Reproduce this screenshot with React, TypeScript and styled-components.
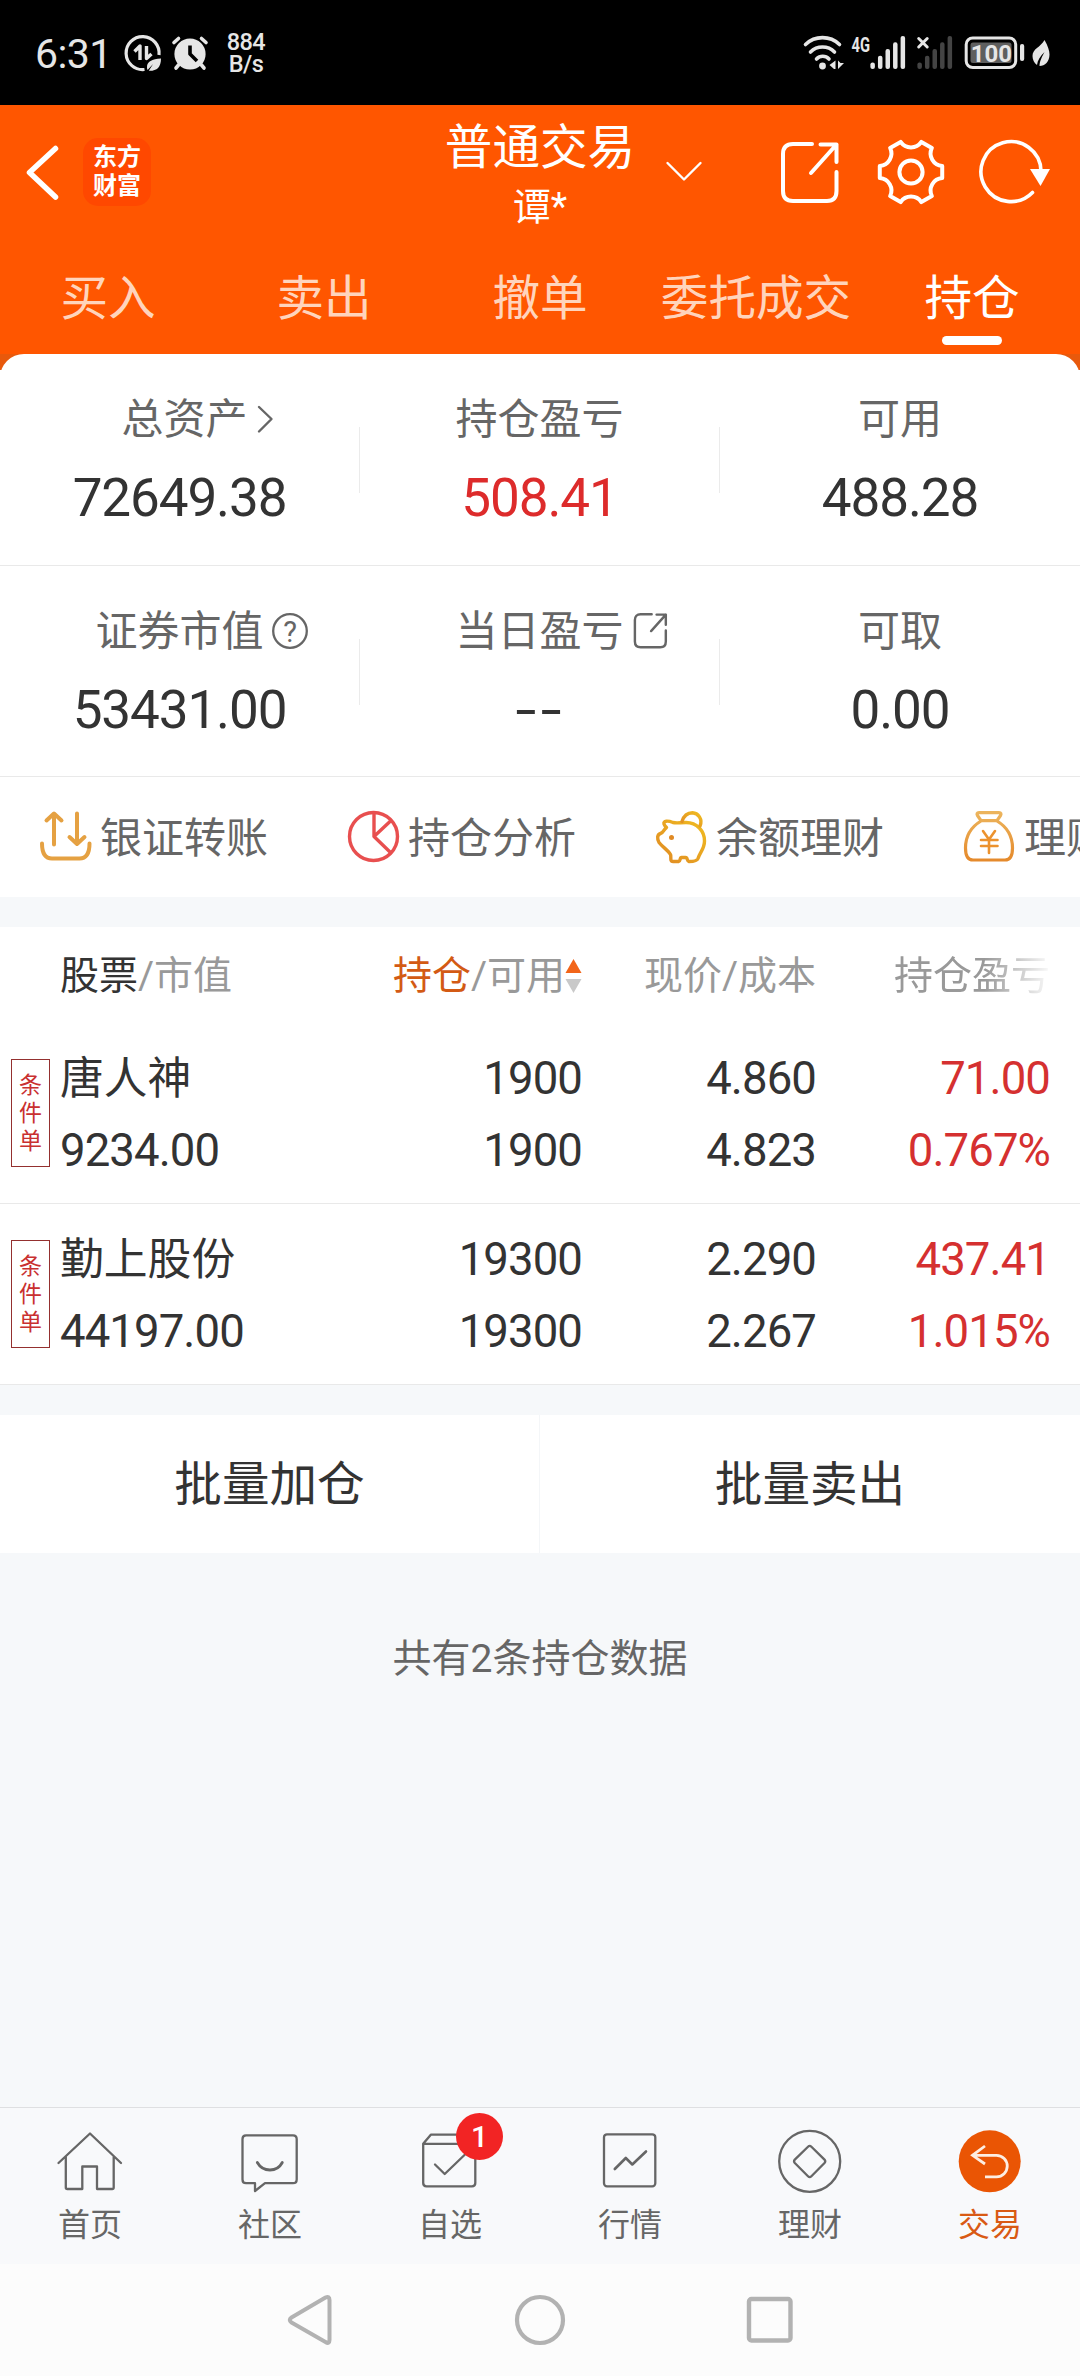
import React from 'react';
import styled, { createGlobalStyle, css } from 'styled-components';

const Global = createGlobalStyle`
  * { box-sizing: border-box; }
  html, body { margin: 0; padding: 0; }
  body {
    font-family: Roboto, "Noto Sans CJK SC", sans-serif;
    color: #333;
    background: #fff;
  }
  svg { display: block; flex: none; overflow: visible; }
`;

const Screen = styled.div`
  width: 1080px;
  height: 2376px;
  display: flex;
  flex-direction: column;
  overflow: hidden;
  background: #fff;
`;

/* ---------- status bar ---------- */

const StatusBar = styled.div`
  height: 105px;
  flex: none;
  background: #000;
  color: #e6e6e6;
  display: flex;
  justify-content: space-between;
  padding: 0 30px 0 35px;
`;

const StatusGroup = styled.div`
  display: flex;
  align-items: center;
`;

const Clock = styled.span`
  width: 88px;
  font-size: 41px;
  line-height: 48px;
  letter-spacing: -0.6px;
  padding-top: 3px;
`;

const AlarmSlot = styled.span`
  margin-left: 9px;
`;

const NetSpeed = styled.div`
  margin-left: 18px;
  width: 40px;
  display: flex;
  flex-direction: column;
  font-size: 23.5px;
  font-weight: 500;
  line-height: 21.5px;
  letter-spacing: -0.6px;
  text-align: center;
  padding-top: 2px;
`;

/* ---------- header ---------- */

const Header = styled.header`
  flex: none;
  height: 265px;
  background: linear-gradient(#ff5600 0 249px, #e8590c 249px);
  color: #fff;
`;

const TopRow = styled.div`
  height: 134px;
  display: grid;
  grid-template-columns: 1fr 192px 1fr;
`;

const TopLeft = styled.div`
  display: flex;
  align-items: center;
  padding-left: 24px;
`;

const Logo = styled.div`
  width: 68px;
  height: 68px;
  margin-left: 23px;
  padding-top: 5px;
  border-radius: 15px;
  background: #ff4800;
  font-size: 24px;
  line-height: 29px;
  font-weight: 700;
  text-align: center;
`;

const TitleBlock = styled.div`
  padding-top: 13px;
  text-align: center;
  white-space: nowrap;
`;

const Title = styled.div`
  font-size: 47.6px;
  line-height: 60px;
`;

const Account = styled.div`
  font-size: 38px;
  line-height: 58px;
`;

const TopRight = styled.div`
  display: flex;
  align-items: center;
  padding-left: 28px;
`;

const IconSlot = styled.span<{ $left: number }>`
  margin-left: ${p => p.$left}px;
`;

const Tabs = styled.nav`
  display: grid;
  grid-template-columns: repeat(5, 1fr);
`;

const Tab = styled.div<{ $active?: boolean }>`
  height: 115px;
  padding-top: 30px;
  display: flex;
  flex-direction: column;
  align-items: center;
  gap: 7px;
  font-size: 47.6px;
  line-height: 60px;
  white-space: nowrap;
  color: ${p => (p.$active ? '#fff' : '#ffd4bc')};
`;

const Underline = styled.i`
  width: 60px;
  height: 9px;
  border-radius: 5px;
  background: #fff;
`;

/* ---------- summary ---------- */

const Card = styled.section`
  flex: none;
  margin-top: -16px;
  border-radius: 24px 24px 0 0;
  background: #fff;
`;

const SummaryRow = styled.div<{ $h: number }>`
  height: ${p => p.$h}px;
  display: grid;
  grid-template-columns: repeat(3, 1fr);
  border-bottom: 1px solid #e9e9e9;
`;

const Metric = styled.div`
  display: flex;
  padding-top: 36px;
  &:not(:last-child)::after {
    content: '';
    width: 1px;
    height: 66px;
    margin-top: 37px;
    background: #ebebeb;
  }
`;

const MetricBody = styled.div`
  flex: 1;
`;

const MetricLabel = styled.div<{ $shift?: number }>`
  display: grid;
  grid-template-columns: 1fr auto 1fr;
  align-items: center;
  padding-left: ${p => p.$shift || 0}px;
  font-size: 42px;
  line-height: 60px;
  color: #666;
  white-space: nowrap;
`;

const LabelIcon = styled.span`
  grid-column: 3;
  padding-left: 8px;
  margin-top: -3px;
`;

const LabelText = styled.span`
  grid-column: 2;
`;

const MetricValue = styled.div<{ $up?: boolean }>`
  margin-top: 16px;
  font-size: 53px;
  line-height: 64px;
  letter-spacing: -1.1px;
  text-align: center;
  color: ${p => (p.$up ? '#dd2b2b' : '#333')};
`;

const Dashes = styled.span`
  display: inline-block;
  margin-right: -3px;
  letter-spacing: 3px;
  transform: scaleX(1.42);
`;

const Actions = styled.div`
  height: 120px;
  display: flex;
  overflow: hidden;
`;

const Action = styled.div`
  flex: none;
  width: 308px;
  padding-left: 40px;
  display: flex;
  align-items: center;
  gap: 8px;
  font-size: 42px;
  line-height: 60px;
  color: #666;
  white-space: nowrap;
  span { padding-top: 3px; }
`;

const Gap = styled.div`
  height: 30px;
  flex: none;
  background: #f6f8fa;
`;

/* ---------- holdings ---------- */

const rowGrid = css`
  display: grid;
  grid-template-columns: 49px 1fr repeat(3, 234px);
  padding-left: 11px;
  padding-right: 30px;
`;

const Holdings = styled.section`
  flex: none;
  background: #fff;
`;

const HeadRow = styled.div`
  ${rowGrid}
  height: 96px;
  padding-top: 2px;
  align-items: center;
  font-size: 39px;
  line-height: 56px;
  color: #999;
  white-space: nowrap;
`;

const HeadCell = styled.div<{ $left?: boolean; $fade?: boolean }>`
  display: flex;
  align-items: center;
  justify-content: ${p => (p.$left ? 'flex-start' : 'flex-end')};
  ${p => p.$left && 'grid-column: 2;'}
  ${p => p.$fade && 'mask-image: linear-gradient(90deg, #000 72%, rgba(0,0,0,.05) 100%);'}
`;

const Strong = styled.span<{ $color: string }>`
  color: ${p => p.$color};
`;

const StockRow = styled.div`
  ${rowGrid}
  height: 181px;
  padding-top: 20px;
  border-bottom: 1px solid #e9e9e9;
`;

const Tag = styled.div`
  width: 39px;
  height: 108px;
  margin-top: 16px;
  padding: 12px 7px 0;
  border: 1px solid #94302f;
  font-size: 23px;
  line-height: 28px;
  color: #c93030;
  display: flex;
  flex-direction: column;
`;

const Cell = styled.div<{ $left?: boolean; $up?: boolean }>`
  text-align: ${p => (p.$left ? 'left' : 'right')};
  font-size: 45.5px;
  line-height: 72px;
  letter-spacing: -0.9px;
  white-space: nowrap;
  color: ${p => (p.$up ? '#d53030' : '#333')};
`;

const StockName = styled.div`
  font-size: 43.8px;
  letter-spacing: 0;
`;

/* ---------- lower area ---------- */

const Batch = styled.div`
  flex: none;
  height: 138px;
  display: grid;
  grid-template-columns: 1fr 1fr;
  background: #fff;
`;

const BatchButton = styled.div`
  display: flex;
  align-items: center;
  justify-content: center;
  font-size: 47.6px;
  line-height: 60px;
  padding-top: 2px;
  &:first-child { border-right: 1px solid #f4f6f8; }
`;

const Rest = styled.div`
  flex: 1;
  padding-top: 76px;
  background: #f6f8fa;
  text-align: center;
  font-size: 39px;
  line-height: 60px;
  color: #666;
`;

const BottomBar = styled.nav`
  flex: none;
  height: 157px;
  display: grid;
  grid-template-columns: repeat(6, 1fr);
  border-top: 1px solid #dedfe1;
  background: #f8f9fb;
`;

const BottomItem = styled.div<{ $active?: boolean }>`
  position: relative;
  padding-top: 17px;
  display: flex;
  flex-direction: column;
  align-items: center;
  font-size: 32px;
  line-height: 44px;
  color: ${p => (p.$active ? '#d95a14' : '#666')};
  span { margin-top: 6px; }
`;

const Badge = styled.b`
  position: absolute;
  left: 96px;
  top: 5px;
  width: 47px;
  height: 47px;
  border-radius: 50%;
  background: #f22424;
  color: #fff;
  font-size: 30px;
  line-height: 48px;
  font-weight: 500;
  text-align: center;
`;

const SystemNav = styled.div`
  flex: none;
  height: 112px;
  display: flex;
  justify-content: center;
  align-items: center;
  gap: 178px;
  background: #fcfcfc;
`;

/* ---------- icons ---------- */

const stroke = (color: string, w: number) => ({
  fill: 'none',
  stroke: color,
  strokeWidth: w,
  strokeLinecap: 'round' as const,
  strokeLinejoin: 'round' as const,
});

const DataSaver = () => (
  <svg width="40" height="40" viewBox="122 33 40 40">
    <path d="M158 56A16.5 16.5 0 1 0 143.5 70.5" transform="translate(0 -1)" {...stroke('#e6e6e6', 3.2)} strokeLinecap="butt" />
    <path d="M133.5 51.5l5.5-5.5V60M145.5 46v12.5l5-4.5" {...stroke('#e6e6e6', 3.4)} strokeLinecap="butt" />
    <path d="M160 58.5c-9 .5-14 3-14 8.5 0 1 0 2 .6 3l5.5-6-4.300 6.800c7.700.4 12.200-3.300 12.200-12.300z" fill="#e6e6e6" />
  </svg>
);

const Alarm = () => (
  <svg width="36" height="36" viewBox="171.500 35 36 36">
    <circle cx="189.500" cy="54" r="15.600" fill="#e6e6e6" />
    <path d="M173.500 42.500l4.500-4M205.500 42.500l-4.500-4M178 65l-2.500 3M201 65l2.500 3" {...stroke('#e6e6e6', 3.6)} />
    <path d="M189.500 45.500V54l7 7" {...stroke('#000', 3.6)} strokeLinecap="butt" />
  </svg>
);

const Wifi = () => (
  <svg width="41" height="36" viewBox="803 35 41 36">
    <path d="M805.500 44.500a24.500 24.500 0 0 1 34 0M810.500 52a17 17 0 0 1 24 0M816.500 59a8.500 8.500 0 0 1 12.500 0" {...stroke('#e6e6e6', 3.6)} />
    <circle cx="822.500" cy="66" r="3.400" fill="#e6e6e6" />
    <path d="M835.500 60.500V69h-1.500l-4.500-4zM838 60.500v8.500l6-6h-3.500z" fill="#e6e6e6" />
  </svg>
);

const Signal = ({ x0, color, children }: { x0: number; color: string; children: React.ReactNode }) => (
  <svg width={55} height="36" viewBox={`${x0} 35 55 36`}>
    {children}
    {[62.5, 55.7, 49, 42.3, 36].map((top, i) => (
      <rect key={top} x={x0 + 20.4 + i * 7.55} y={top} width="4.500" height={69 - top} rx="2.100" fill={color} />
    ))}
  </svg>
);

const Battery = () => (
  <svg width="61" height="36" viewBox="964 35 61 36">
    <rect x="966.200" y="38" width="49.500" height="29.500" rx="6.500" {...stroke('#e6e6e6', 3)} />
    <rect x="970.500" y="42.500" width="41" height="20.500" rx="2.500" fill="#5f5f5f" />
    <text x="991.300" y="62" fontSize="24" fontWeight="700" textAnchor="middle" fill="#e6e6e6">100</text>
    <rect x="1020" y="44" width="4.200" height="17" rx="2" fill="#e6e6e6" />
  </svg>
);

const Leaf = () => (
  <svg width="18" height="28" viewBox="1031.500 39 18 28">
    <path d="M1044 40c3.500 6 5 11 5 14.500 0 7-4.500 11.500-10 11.500 0-5 3-10 5-14-4 4-7 8-7.500 13-3-2-4.500-5.500-4.500-9 0-7.500 8-8.500 12-16z" fill="#e6e6e6" />
  </svg>
);

const Back = () => (
  <svg width="36" height="60" viewBox="24 142 36 60">
    <path d="M55.500 148.500L29.500 172.500 55.500 197" {...stroke('#fff', 5.5)} />
  </svg>
);

const Down = () => (
  <svg width="40" height="24" viewBox="664 160 40 24">
    <path d="M667.500 163L684 179.500 700.500 163" {...stroke('#fff', 2.4)} />
  </svg>
);

const Export = ({ size, color, w }: { size: number; color: string; w: number }) => (
  <svg width={size} height={size} viewBox="0 0 64 64">
    <path d="M34 4H15Q5 4 5 14V51Q5 61 15 61H49Q58.500 61 58.500 51V32" {...stroke(color, w)} />
    <path d="M42.500 4.500H58.500V22M58.500 4.500L33 33" {...stroke(color, w)} />
  </svg>
);

const gearPath = (() => {
  const pt = (deg: number) => {
    const a = (deg * Math.PI) / 180;
    return `${(34 + 31.8 * Math.sin(a)).toFixed(2)} ${(34 - 31.8 * Math.cos(a)).toFixed(2)}`;
  };
  let d = `M${pt(-19)}`;
  for (let k = 0; k < 6; k++) {
    d += `A12.500 12.500 0 0 0 ${pt(60 * k + 19)}L${pt(60 * k + 41)}`;
  }
  return d + 'Z';
})();

const Gear = () => (
  <svg width="68" height="68" viewBox="0 0 68 68">
    <path d={gearPath} {...stroke('#fff', 4)} />
    <circle cx="34" cy="34" r="11.600" {...stroke('#fff', 4)} />
  </svg>
);

const Refresh = () => (
  <svg width="74" height="68" viewBox="977 138 74 68">
    <path d="M1041 171A30 30 0 1 0 1032.500 192.500" {...stroke('#fff', 3.6)} />
    <path d="M1030 169h20l-9.500 17z" fill="#fff" />
  </svg>
);

const Chevron = () => (
  <svg width="18" height="30" viewBox="0 0 18 30">
    <path d="M3 3L15.500 15 3 27.500" {...stroke('#666', 2.4)} />
  </svg>
);

const Help = () => (
  <svg width="36" height="36" viewBox="0 0 36 36">
    <circle cx="18" cy="18" r="16.800" {...stroke('#666', 2.3)} />
    <text x="18" y="28.500" fontSize="29" textAnchor="middle" fill="#666">?</text>
  </svg>
);

const Transfer = () => (
  <svg width="52" height="52" viewBox="0 0 52 52">
    <path d="M14 33.500V3M6.500 9.500L14 2.500 21.500 9.500M37 2.500V33M29.500 26L37 33 44.500 26M2 32.500Q2 47.500 12 47.500H39.500Q49.500 47.500 49.500 32.500" {...stroke('#e5a142', 4)} />
  </svg>
);

const Pie = () => (
  <svg width="52" height="52" viewBox="0 0 52 52">
    <circle cx="25.500" cy="25.500" r="24" {...stroke('#e84f4f', 3.4)} />
    <path d="M26 2V25.500L42 10.500M26 25.500L42 41" {...stroke('#e84f4f', 3.4)} />
  </svg>
);

const Pig = () => (
  <svg width="52" height="52" viewBox="0 0 52 52">
    <defs>
      <linearGradient id="pig" x1="1" y1="0" x2="0" y2="1">
        <stop offset="0" stopColor="#f0bc20" />
        <stop offset="1" stopColor="#e08a24" />
      </linearGradient>
    </defs>
    <path
      d="M8 13C7 9.500 12 9.500 17 11.500 21 12.500 24 11.500 30 11.500 41 11.500 48.500 20 48.500 30 48.500 38 44 41 42 47.500 41 50.500 36 50.500 33 50.500 30.500 50 32 46.500 29.500 46.500H25.500C23.500 46.500 25 50 22.500 50.500H17C13.500 50.500 15.500 46 14.500 43.500 12 39 7 36.500 3 31.500 1 28 1 23.500 4.500 22.500 8 21.500 7.500 18.500 10.500 16.500 9 15 8.300 14 8 13Z"
      {...stroke('url(#pig)', 3.4)}
    />
    <path d="M26 10.500C28 4 32.500 1.700 36.500 1.700 42 2 47 8 44 15" {...stroke('url(#pig)', 3.4)} />
    <circle cx="15.500" cy="26.500" r="2.500" fill="#e08a24" />
  </svg>
);

const Bag = () => (
  <svg width="52" height="52" viewBox="0 0 52 52">
    <defs>
      <linearGradient id="bag" x1="0" y1="0" x2="0" y2="1">
        <stop offset="0" stopColor="#ecb45c" />
        <stop offset="1" stopColor="#e58a2c" />
      </linearGradient>
    </defs>
    <path
      d="M15 1.700H35Q38 1.700 36.500 4.500L33 9.700H17L13.500 4.500Q12 1.700 15 1.700ZM17 10C7 16 1.500 26 1.500 37 1.500 44 3.500 49 9 49H41C46.500 49 48.500 44 48.500 37 48.500 26 43 16 33 10"
      {...stroke('url(#bag)', 3.2)}
    />
    <path d="M19 20L25 28.500 31 20M25 28.500V42M17 29H33.500M17 35H33.500" {...stroke('#ec922e', 2.6)} />
  </svg>
);

const SortMark = () => (
  <svg width="17" height="36" viewBox="0 0 17 36">
    <path d="M8.500 1L16.500 15H.5z" fill="#f26519" />
    <path d="M.5 21h16L8.500 35z" fill="#c9c9c9" />
  </svg>
);

const line = stroke('#666', 2.3);

const HomeIcon = () => (
  <svg width="72" height="72" viewBox="0 0 72 72">
    <path d="M4.500 38L36 8.500 67 38M11.800 32V62.500Q11.800 64 13.300 64H28.300V41.500H43V64H58.200Q59.700 64 59.700 62.500V32" {...line} />
  </svg>
);

const CommunityIcon = () => (
  <svg width="72" height="72" viewBox="0 0 72 72">
    <path d="M12 10.300H59Q62.700 10.300 62.700 14V54.500Q62.700 58.200 59 58.200H31L21 66V58.200H12Q8.500 58.200 8.500 54.500V14Q8.500 10.300 12 10.300Z" {...line} />
    <path d="M23.300 37.500C29 47.500 43 47.500 48.300 37.500" {...line} strokeWidth={2.8} />
  </svg>
);

const WatchIcon = () => (
  <svg width="72" height="72" viewBox="0 0 72 72">
    <path d="M9.200 18.800V58Q9.200 61.300 12.500 61.300H58Q61.300 61.300 61.300 58V18.800H9.200L16.800 9.700H56L61.300 18.800" {...line} />
    <path d="M21 39.500L30.700 49 51 29.500" {...line} />
  </svg>
);

const MarketIcon = () => (
  <svg width="72" height="72" viewBox="0 0 72 72">
    <rect x="10" y="9.300" width="51.300" height="52" rx="3" {...line} />
    <path d="M20.800 44L31.800 33 38.300 39.500 52 26.500" {...line} strokeWidth={2.6} />
  </svg>
);

const WealthIcon = () => (
  <svg width="72" height="72" viewBox="0 0 72 72">
    <circle cx="35.700" cy="36.300" r="30.500" {...line} />
    <path d="M34 21.700Q35.700 20 37.400 21.700L50.500 34.600Q52 36.300 50.500 38L37.400 51.300Q35.700 53 34 51.300L20.800 38Q19.300 36.300 20.800 34.600Z" {...line} />
  </svg>
);

const TradeIcon = () => (
  <svg width="72" height="72" viewBox="0 0 72 72">
    <circle cx="35.700" cy="36.300" r="31" fill="#ea5504" />
    <path d="M31 21L18.500 30.300 31 39M18.500 30.300H42.500A10.700 10.700 0 0 1 42.500 51.800H31" {...stroke('#fdeee2', 2.8)} strokeLinecap="butt" strokeLinejoin="miter" />
  </svg>
);

/* ---------- data ---------- */

const actions = [
  { name: '银证转账', Icon: Transfer },
  { name: '持仓分析', Icon: Pie },
  { name: '余额理财', Icon: Pig },
  { name: '理财', Icon: Bag },
];

const stocks = [
  { name: '唐人神', value: '9234.00', qty: '1900', avail: '1900', price: '4.860', cost: '4.823', pl: '71.00', rate: '0.767%' },
  { name: '勤上股份', value: '44197.00', qty: '19300', avail: '19300', price: '2.290', cost: '2.267', pl: '437.41', rate: '1.015%' },
];

const bottom = [
  { name: '首页', Icon: HomeIcon },
  { name: '社区', Icon: CommunityIcon },
  { name: '自选', Icon: WatchIcon, badge: '1' },
  { name: '行情', Icon: MarketIcon },
  { name: '理财', Icon: WealthIcon },
  { name: '交易', Icon: TradeIcon, active: true },
];

type MetricProps = { label: string; value: React.ReactNode; icon?: React.ReactNode; shift?: number; up?: boolean };

const MetricCell = ({ label, value, icon, shift, up }: MetricProps) => (
  <Metric>
    <MetricBody>
      <MetricLabel $shift={shift}>
        <LabelText>{label}</LabelText>
        {icon && <LabelIcon>{icon}</LabelIcon>}
      </MetricLabel>
      <MetricValue $up={up}>{value}</MetricValue>
    </MetricBody>
  </Metric>
);

const StatusIcons = styled(StatusGroup)`
  & > :nth-child(2) { margin-left: 6px; }
  & > :nth-child(3) { margin-left: -8px; }
  & > :nth-child(4) { margin-left: 12px; }
  & > :nth-child(5) { margin-left: 7px; }
`;

export default function App() {
  return (
    <Screen>
      <Global />
      <StatusBar>
        <StatusGroup>
          <Clock>6:31</Clock>
          <DataSaver />
          <AlarmSlot><Alarm /></AlarmSlot>
          <NetSpeed><span>884</span><span>B/s</span></NetSpeed>
        </StatusGroup>
        <StatusIcons>
          <Wifi />
          <Signal x0={850.4} color="#e6e6e6">
            <text x="852" y="51.500" fontSize="20" fontWeight="700" fill="#e6e6e6" textLength="18.500" lengthAdjust="spacingAndGlyphs">4G</text>
          </Signal>
          <Signal x0={897.3} color="#444">
            <path d="M919 38.500l8.500 8.500M927.500 38.500l-8.500 8.500" {...stroke('#e6e6e6', 3)} />
          </Signal>
          <Battery />
          <Leaf />
        </StatusIcons>
      </StatusBar>

      <Header>
        <TopRow>
          <TopLeft>
            <Back />
            <Logo>东方<br />财富</Logo>
          </TopLeft>
          <TitleBlock>
            <Title>普通交易</Title>
            <Account>谭*</Account>
          </TitleBlock>
          <TopRight>
            <Down />
            <IconSlot $left={74}><Export size={64} color="#fff" w={4} /></IconSlot>
            <IconSlot $left={35}><Gear /></IconSlot>
            <IconSlot $left={32}><Refresh /></IconSlot>
          </TopRight>
        </TopRow>
        <Tabs>
          <Tab>买入</Tab>
          <Tab>卖出</Tab>
          <Tab>撤单</Tab>
          <Tab>委托成交</Tab>
          <Tab $active>持仓<Underline /></Tab>
        </Tabs>
      </Header>

      <Card>
        <SummaryRow $h={212}>
          <MetricCell label="总资产" value="72649.38" icon={<Chevron />} shift={10} />
          <MetricCell label="持仓盈亏" value="508.41" up />
          <MetricCell label="可用" value="488.28" />
        </SummaryRow>
        <SummaryRow $h={211}>
          <MetricCell label="证券市值" value="53431.00" icon={<Help />} />
          <MetricCell label="当日盈亏" value={<Dashes>--</Dashes>} icon={<Export size={37} color="#666" w={4.2} />} />
          <MetricCell label="可取" value="0.00" />
        </SummaryRow>
        <Actions>
          {actions.map(({ name, Icon }) => (
            <Action key={name}><Icon /><span>{name}</span></Action>
          ))}
        </Actions>
      </Card>

      <Gap />

      <Holdings>
        <HeadRow>
          <HeadCell $left><Strong $color="#333">股票</Strong>/市值</HeadCell>
          <HeadCell><Strong $color="#d35a14">持仓</Strong>/可用<SortMark /></HeadCell>
          <HeadCell>现价/成本</HeadCell>
          <HeadCell $fade>持仓盈亏</HeadCell>
        </HeadRow>
        {stocks.map(s => (
          <StockRow key={s.name}>
            <Tag><span>条</span><span>件</span><span>单</span></Tag>
            <Cell $left><StockName>{s.name}</StockName>{s.value}</Cell>
            <Cell>{s.qty}<br />{s.avail}</Cell>
            <Cell>{s.price}<br />{s.cost}</Cell>
            <Cell $up>{s.pl}<br />{s.rate}</Cell>
          </StockRow>
        ))}
      </Holdings>

      <Gap />

      <Batch>
        <BatchButton>批量加仓</BatchButton>
        <BatchButton>批量卖出</BatchButton>
      </Batch>
      <Rest>共有2条持仓数据</Rest>

      <BottomBar>
        {bottom.map(({ name, Icon, badge, active }) => (
          <BottomItem key={name} $active={active}>
            <Icon />
            <span>{name}</span>
            {badge && <Badge>{badge}</Badge>}
          </BottomItem>
        ))}
      </BottomBar>

      <SystemNav>
        <svg width="52" height="52" viewBox="0 0 52 52">
          <path d="M41.500 3.500Q45.500 1.500 45.500 6V46Q45.500 50.500 41.500 48L7.500 28.500Q4 26 7.500 23.500Z" {...stroke('#b2b2b2', 4)} />
        </svg>
        <svg width="52" height="52" viewBox="0 0 52 52">
          <circle cx="26" cy="26" r="23" {...stroke('#b2b2b2', 4.2)} />
        </svg>
        <svg width="52" height="52" viewBox="0 0 52 52">
          <rect x="5" y="5" width="41.500" height="41.500" rx="2.500" {...stroke('#b2b2b2', 4.4)} />
        </svg>
      </SystemNav>
    </Screen>
  );
}
